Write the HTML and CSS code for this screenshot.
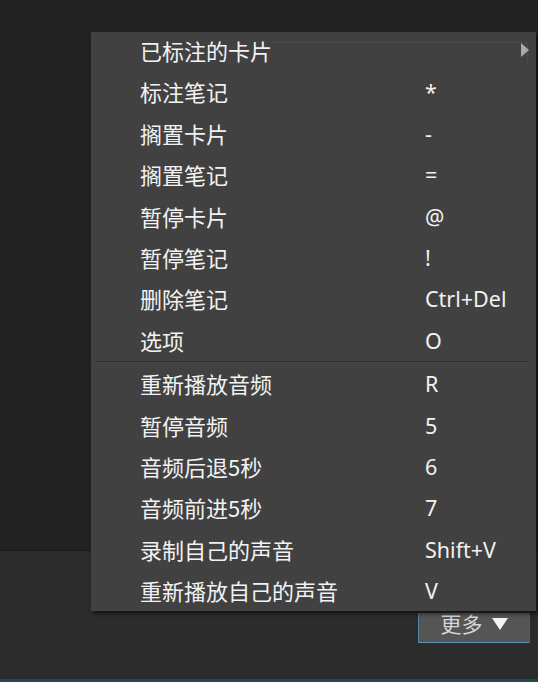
FILE: index.html
```html
<!DOCTYPE html>
<html lang="zh-CN">
<head>
<meta charset="utf-8">
<title>更多</title>
<link rel="stylesheet" href="styles.css">
</head>
<body>
<div class="page">
  <div class="upper"></div>
  <div class="lower">
    <button class="more-btn">更多 <span class="tri"></span></button>
  </div>
  <div class="status"></div>

  <div class="menu">
    <div class="section">
      <div class="item sub"><span class="label">已标注的卡片</span><span class="key"></span><span class="hover-edge"></span><span class="arrow"></span></div>
      <div class="item"><span class="label">标注笔记</span><span class="key">*</span></div>
      <div class="item"><span class="label">搁置卡片</span><span class="key">-</span></div>
      <div class="item"><span class="label">搁置笔记</span><span class="key">=</span></div>
      <div class="item"><span class="label">暂停卡片</span><span class="key">@</span></div>
      <div class="item"><span class="label">暂停笔记</span><span class="key">!</span></div>
      <div class="item"><span class="label">删除笔记</span><span class="key">Ctrl+Del</span></div>
      <div class="item"><span class="label">选项</span><span class="key">O</span></div>
    </div>
    <div class="sep"></div>
    <div class="section">
      <div class="item"><span class="label">重新播放音频</span><span class="key">R</span></div>
      <div class="item"><span class="label">暂停音频</span><span class="key">5</span></div>
      <div class="item"><span class="label">音频后退5秒</span><span class="key">6</span></div>
      <div class="item"><span class="label">音频前进5秒</span><span class="key">7</span></div>
      <div class="item"><span class="label">录制自己的声音</span><span class="key">Shift+V</span></div>
      <div class="item"><span class="label">重新播放自己的声音</span><span class="key">V</span></div>
    </div>
  </div>
</div>
</body>
</html>
```

FILE: styles.css
```css
* { box-sizing: border-box; }
html, body { margin: 0; padding: 0; }
body {
  width: 538px;
  height: 682px;
  overflow: hidden;
  background: #222222;
  font-family: "Noto Sans CJK SC", "Noto Sans", sans-serif;
}
.page {
  position: relative;
  width: 538px;
  height: 682px;
  display: flex;
  flex-direction: column;
}
.upper {
  height: 551px;
  background: #222222;
  border-bottom: 1px solid #161616;
}
.lower {
  flex: 1;
  background: #2c2c2c;
  display: flex;
  justify-content: flex-end;
  align-items: flex-start;
  padding: 62px 8px 0 0;
}
.status {
  height: 3px;
  background: #1d4a4c;
}
.more-btn {
  width: 112px;
  height: 30px;
  background: #555555;
  border: 1px solid #3f6374;
  border-bottom-color: #5a97b3;
  border-left-color: #4e86a0;
  color: #d6d6d6;
  font-family: "Noto Sans CJK SC", sans-serif;
  font-size: 21px;
  line-height: 20px;
  padding: 0 0 10px 0;
  display: flex;
  align-items: center;
  justify-content: center;
  gap: 9px;
}
.more-btn .tri {
  width: 0;
  height: 0;
  border-left: 8px solid transparent;
  border-right: 8px solid transparent;
  border-top: 12px solid #f4f4f4;
  margin-top: 2px;
}
.menu {
  position: absolute;
  left: 91px;
  top: 32px;
  width: 445px;
  height: 579px;
  overflow: hidden;
  background: #414141;
  box-shadow: 2px 3px 4px rgba(0, 0, 0, 0.55);
  padding-top: 0;
}
.section { display: flex; flex-direction: column; margin-top: -2px; }
.section + .section { margin-top: -1px; }
.item {
  position: relative;
  display: grid;
  grid-template-columns: 285px 1fr;
  padding-left: 49px;
  height: 41.4px;
  line-height: 41.4px;
  color: #f2f2f2;
  font-size: 22px;
  white-space: nowrap;
}
.label { font-family: "Noto Sans CJK SC", sans-serif; }
.key { font-family: "Noto Sans", "Open Sans", sans-serif; font-size: 21.5px; }
.sep {
  height: 1px;
  margin: 0 8px 2px 4px;
  background: #2f2f2f;
  border-bottom: 1px solid #474747;
  box-sizing: content-box;
}
.hover-edge {
  position: absolute;
  left: 180px;
  right: 8px;
  top: 12px;
  height: 22px;
  border-top: 1px solid #4a4a4a;
  border-right: 1px solid #4a4a4a;
}
.arrow {
  position: absolute;
  right: 7px;
  top: 13px;
  width: 0;
  height: 0;
  border-top: 7px solid transparent;
  border-bottom: 7px solid transparent;
  border-left: 8px solid #a9a9a9;
}
```
